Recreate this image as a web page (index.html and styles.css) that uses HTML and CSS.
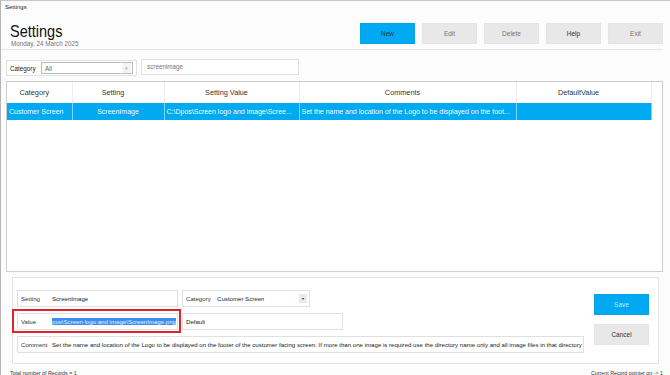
FILE: index.html
```html
<!DOCTYPE html>
<html lang="en">
<head>
  <meta charset="UTF-8">
  <title>Settings</title>
  <link rel="stylesheet" href="styles.css">
</head>
<body>
  <div class="window">
    <div class="titlebar">Settings</div>

    <div class="header">
      <div class="heading">
        <h1>Settings</h1>
        <div class="date">Monday, 24 March 2025</div>
      </div>
      <div class="actions">
        <button class="btn primary">New</button>
        <button class="btn">Edit</button>
        <button class="btn">Delete</button>
        <button class="btn dark">Help</button>
        <button class="btn">Exit</button>
      </div>
    </div>

    <div class="filters">
      <div class="filter-cat">
        <span class="filter-label">Category</span>
        <div class="select">
          <span>All</span>
          <span class="arrow">&#9662;</span>
        </div>
      </div>
      <div class="search">screenimage</div>
    </div>

    <div class="grid-box">
      <table class="grid">
        <colgroup>
          <col style="width:65px">
          <col style="width:92px">
          <col style="width:135px">
          <col style="width:217px">
          <col style="width:135px">
        </colgroup>
        <thead>
          <tr>
            <th>Category</th>
            <th>Setting</th>
            <th>Setting Value</th>
            <th>Comments</th>
            <th>DefaultValue</th>
          </tr>
        </thead>
        <tbody>
          <tr class="selected">
            <td>Customer Screen</td>
            <td class="center">ScreenImage</td>
            <td>C:\Dpos\Screen logo and image\Scree...</td>
            <td>Set the name and location of the Logo to be displayed on the foot...</td>
            <td></td>
          </tr>
        </tbody>
      </table>
    </div>

    <div class="editor">
      <div class="fields">
        <div class="row">
          <div class="field w161">
            <span class="label">Setting</span>
            <span class="value">ScreenImage</span>
          </div>
          <div class="field w128">
            <span class="label">Category</span>
            <span class="value">Customer Screen</span>
            <span class="drop">&#9662;</span>
          </div>
        </div>
        <div class="row">
          <div class="field w161 marked">
            <span class="label">Value</span>
            <span class="value"><span class="sel">pos\Screen logo and image\ScreenImage.png</span></span>
          </div>
          <div class="field w161">
            <span class="value">Default</span>
          </div>
        </div>
        <div class="row">
          <div class="field w567">
            <span class="label">Comment</span>
            <span class="value">Set the name and location of the Logo to be displayed on the footer of the customer facing screen. If more than one image is required use the directory name only and all image files in that directory will be used</span>
          </div>
        </div>
      </div>
      <div class="side">
        <button class="btn primary">Save</button>
        <button class="btn dark">Cancel</button>
      </div>
    </div>

    <div class="status">
      <span>Total number of Records = 1</span>
      <span>Current Record pointer on -&gt; 1</span>
    </div>
  </div>
</body>
</html>
```

FILE: styles.css
```css
* {
  box-sizing: border-box;
}

body {
  margin: 0;
  background: #fcfcfc;
  font-family: "Liberation Sans", Arial, sans-serif;
  color: #222;
}

.window {
  width: 670px;
  height: 375px;
  border-left: 1px solid #b5b5b5;
  border-top: 1px solid #c8c8c8;
  overflow: hidden;
}

.titlebar {
  height: 13px;
  padding: 3px 0 0 4px;
  font-size: 6px;
  color: #222;
}

.header {
  display: flex;
  justify-content: space-between;
  height: 36px;
  width: 662px;
  padding: 0 0 0 9px;
  border-bottom: 1px solid #e6e6e6;
}

.heading h1 {
  margin: 8px 0 0;
  font-size: 14.5px;
  font-weight: normal;
  line-height: 16px;
  color: #111;
  transform: scaleY(1.12);
  transform-origin: left top;
}

.date {
  margin: 2px 0 0 1px;
  font-size: 6.3px;
  color: #777;
}

.actions {
  display: flex;
  gap: 7px;
  padding-top: 9px;
}

.btn {
  width: 55px;
  height: 21px;
  border: 1px solid #e4e4e4;
  background: #e8e8e8;
  color: #777;
  font-family: inherit;
  font-size: 6.5px;
  padding: 0;
}

.btn.dark {
  color: #333;
}

.btn.primary {
  background: #00a9f1;
  border-color: #0aa2e0;
  color: #2a3a44;
}

.editor .btn.primary {
  color: #bfe9fb;
}

.filters {
  display: flex;
  gap: 4px;
  padding: 9px 0 0 5px;
  height: 31px;
}

.filter-cat {
  display: flex;
  align-items: center;
  width: 131px;
  height: 16px;
  margin-top: 1px;
  border: 1px solid #e2e2e2;
  background: #fff;
  padding: 0 2px 0 3px;
}

.filter-label {
  flex: none;
  font-size: 6.3px;
  width: 31px;
}

.select {
  display: flex;
  justify-content: space-between;
  align-items: center;
  width: 92px;
  height: 12px;
  border: 1px solid #bcbcbc;
  background: #fff;
  font-size: 6.3px;
  color: #666;
  padding-left: 3px;
}

.select .arrow {
  width: 9px;
  height: 10px;
  font-size: 5px;
  line-height: 10px;
  text-align: center;
  color: #aaa;
  background: #f4f4f4;
  margin-right: 1px;
}

.search {
  width: 158px;
  height: 16px;
  border: 1px solid #e0e0e0;
  background: #fff;
  font-size: 6.3px;
  color: #777;
  line-height: 14px;
  padding-left: 5px;
}

.grid-box {
  margin-left: 5px;
  width: 657px;
  height: 191px;
  border: 1px solid #cfcfcf;
  background: #fff;
}

.grid {
  border-collapse: collapse;
  table-layout: fixed;
  width: 644px;
  font-size: 7px;
}

.grid th {
  height: 21px;
  padding: 0 10px 0 0;
  font-weight: normal;
  font-size: 7.3px;
  color: #333;
  border-right: 1px solid #ececec;
  text-align: center;
}

.grid td {
  height: 17px;
  padding: 0 2px;
  white-space: nowrap;
  overflow: hidden;
  border-right: 1px solid #7fd3f6;
}

.grid td.center {
  text-align: center;
}

.grid tr.selected {
  background: #00aaf0;
  color: #f4fbff;
}

.editor {
  display: flex;
  justify-content: space-between;
  margin: 5px 0 0 11px;
  width: 647px;
  height: 87px;
  border: 1px solid #e4e4e4;
  background: #fff;
  padding: 12px 9px 0 4px;
}

.fields {
  display: flex;
  flex-direction: column;
  gap: 6px;
}

.row {
  display: flex;
  gap: 4px;
}

.field {
  position: relative;
  display: flex;
  align-items: center;
  height: 17px;
  border: 1px solid #e0e0e0;
  background: #fff;
  font-size: 6.1px;
  padding-left: 3px;
  overflow: hidden;
  white-space: nowrap;
}

.w161 {
  width: 161px;
}

.w128 {
  width: 128px;
}

.w567 {
  width: 567px;
}

.label {
  flex: none;
  width: 31px;
  color: #333;
}

.value {
  overflow: hidden;
  color: #222;
}

.sel {
  background: #3b8ef0;
  color: #e6f1ff;
}

.drop {
  position: absolute;
  right: 2px;
  top: 3px;
  width: 8px;
  height: 9px;
  background: #eaeaea;
  font-size: 4px;
  line-height: 9px;
  text-align: center;
}

.marked {
  overflow: visible;
}

.marked::after {
  content: "";
  position: absolute;
  left: -6px;
  right: -4px;
  top: -5px;
  bottom: -4px;
  border: 2px solid #e2232b;
}

.marked .value {
  width: 125px;
}

.side {
  display: flex;
  flex-direction: column;
  gap: 9px;
  padding-top: 4px;
}

.status {
  display: flex;
  justify-content: space-between;
  width: 662px;
  padding: 6px 0 0 9px;
  font-size: 5.3px;
  color: #333;
}
```
